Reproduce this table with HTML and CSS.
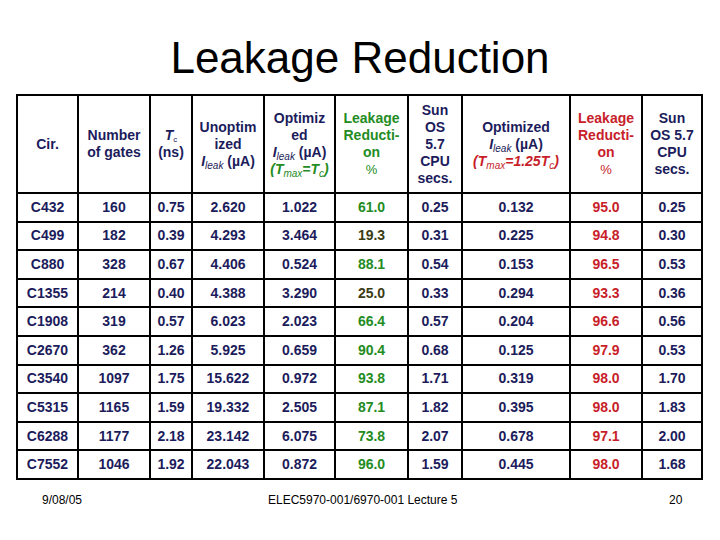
FILE: index.html
```html
<!DOCTYPE html>
<html>
<head>
<meta charset="utf-8">
<link rel="stylesheet" href="styles.css">
</head>
<body>
<div class="slide">
  <h1 class="title">Leakage Reduction</h1>
  <table class="data">
    <colgroup>
      <col style="width:61px"><col style="width:72px"><col style="width:42px"><col style="width:72px"><col style="width:71px">
      <col style="width:73px"><col style="width:54px"><col style="width:108px"><col style="width:72px"><col style="width:60px">
    </colgroup>
    <thead>
      <tr>
        <th>Cir.</th>
        <th>Number<br>of gates</th>
        <th><i>T</i><sub class="sm">c</sub><br>(ns)</th>
        <th>Unoptim<br>ized<br><i>I</i><sub class="lk">leak</sub> (µA)</th>
        <th>Optimiz<br>ed<br><i>I</i><sub class="lk">leak</sub> (µA)<br><span class="g"><i>(T<sub class="lk">max</sub>=T<sub class="lk">c</sub>)</i></span></th>
        <th class="g">Leakage<br>Reducti-<br>on<br><span class="pct">%</span></th>
        <th>Sun<br>OS<br>5.7<br>CPU<br>secs.</th>
        <th>Optimized<br><i>I</i><sub class="lk">leak</sub> (µA)<br><span class="r"><i>(T<sub class="lk">max</sub>=1.25T<sub class="lk">c</sub>)</i></span></th>
        <th class="r">Leakage<br>Reducti-<br>on<br><span class="pct">%</span></th>
        <th>Sun<br>OS 5.7<br>CPU<br>secs.</th>
      </tr>
    </thead>
    <tbody>
      <tr><td>C432</td><td>160</td><td>0.75</td><td>2.620</td><td>1.022</td><td class="g">61.0</td><td>0.25</td><td>0.132</td><td class="r">95.0</td><td>0.25</td></tr>
      <tr><td>C499</td><td>182</td><td>0.39</td><td>4.293</td><td>3.464</td><td class="o">19.3</td><td>0.31</td><td>0.225</td><td class="r">94.8</td><td>0.30</td></tr>
      <tr><td>C880</td><td>328</td><td>0.67</td><td>4.406</td><td>0.524</td><td class="g">88.1</td><td>0.54</td><td>0.153</td><td class="r">96.5</td><td>0.53</td></tr>
      <tr><td>C1355</td><td>214</td><td>0.40</td><td>4.388</td><td>3.290</td><td class="o">25.0</td><td>0.33</td><td>0.294</td><td class="r">93.3</td><td>0.36</td></tr>
      <tr><td>C1908</td><td>319</td><td>0.57</td><td>6.023</td><td>2.023</td><td class="g">66.4</td><td>0.57</td><td>0.204</td><td class="r">96.6</td><td>0.56</td></tr>
      <tr><td>C2670</td><td>362</td><td>1.26</td><td>5.925</td><td>0.659</td><td class="g">90.4</td><td>0.68</td><td>0.125</td><td class="r">97.9</td><td>0.53</td></tr>
      <tr><td>C3540</td><td>1097</td><td>1.75</td><td>15.622</td><td>0.972</td><td class="g">93.8</td><td>1.71</td><td>0.319</td><td class="r">98.0</td><td>1.70</td></tr>
      <tr><td>C5315</td><td>1165</td><td>1.59</td><td>19.332</td><td>2.505</td><td class="g">87.1</td><td>1.82</td><td>0.395</td><td class="r">98.0</td><td>1.83</td></tr>
      <tr><td>C6288</td><td>1177</td><td>2.18</td><td>23.142</td><td>6.075</td><td class="g">73.8</td><td>2.07</td><td>0.678</td><td class="r">97.1</td><td>2.00</td></tr>
      <tr><td>C7552</td><td>1046</td><td>1.92</td><td>22.043</td><td>0.872</td><td class="g">96.0</td><td>1.59</td><td>0.445</td><td class="r">98.0</td><td>1.68</td></tr>
    </tbody>
  </table>
  <div class="footer">
    <span class="date">9/08/05</span>
    <span class="course">ELEC5970-001/6970-001 Lecture 5</span>
    <span class="page">20</span>
  </div>
</div>
</body>
</html>
```
FILE: styles.css
```css
html, body {
  margin: 0;
  padding: 0;
  background: #ffffff;
}
.slide {
  width: 720px;
  height: 540px;
  position: relative;
  font-family: "Liberation Sans", Arial, sans-serif;
  padding-top: 33px;
  box-sizing: border-box;
}
.title {
  margin: 0;
  font-weight: normal;
  font-size: 44px;
  line-height: 50px;
  text-align: center;
  color: #000;
}
.data {
  margin: 11px 0 0 16px;
  border-collapse: collapse;
  table-layout: fixed;
  width: 687px;
  color: #1c1c5c;
  font-weight: bold;
  font-size: 14px;
}
.data th, .data td {
  border: 2px solid #000;
  text-align: center;
  vertical-align: middle;
  padding: 0;
}
.data th {
  height: 96px;
  line-height: 17px;
  font-weight: bold;
}
.data td {
  height: 26.6px;
  line-height: 17px;
}
sub {
  vertical-align: baseline;
  position: relative;
  top: 3px;
  line-height: 0;
}
sub.sm {
  font-size: 8px;
  font-weight: normal;
  top: 2px;
}
sub.lk {
  font-size: 10px;
  font-weight: normal;
  font-style: italic;
}
.g { color: #238c23; }
.r { color: #c81e2a; }
.o { color: #3c3c14; }
.pct {
  font-weight: normal;
  font-size: 13px;
}
.footer {
  display: flex;
  align-items: center;
  margin-top: 13px;
  font-size: 12px;
  color: #000;
  font-family: "Liberation Sans Narrow", "Liberation Sans", Arial, sans-serif;
}
.date { margin-left: 42px; width: 226px; }
.course { width: 401px; }
.page { }
```
